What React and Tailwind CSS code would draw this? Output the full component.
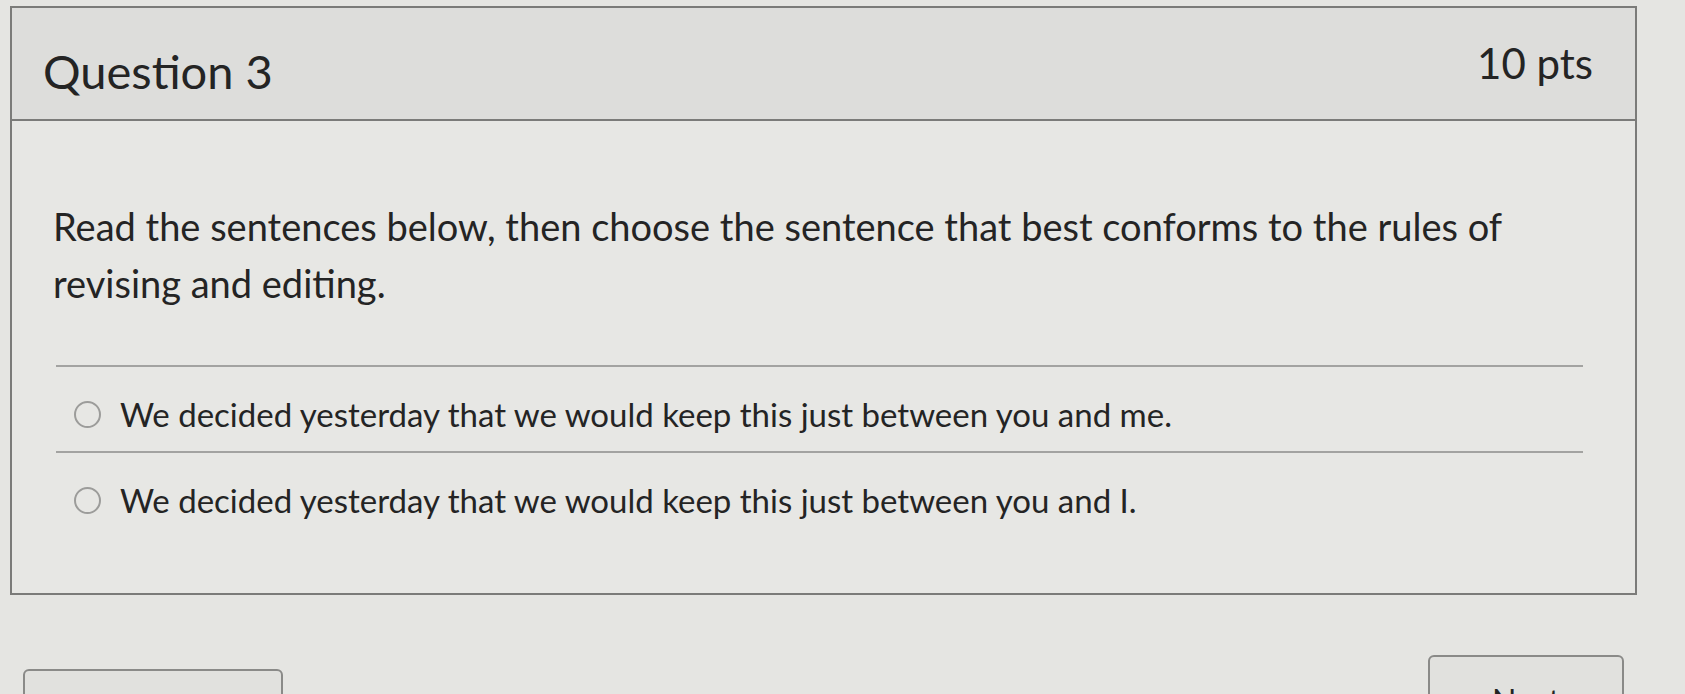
import React from 'react';

const options = [
  'We decided yesterday that we would keep this just between you and me.',
  'We decided yesterday that we would keep this just between you and I.',
];

function Option({ text }) {
  return (
    <label className="flex items-center h-[86px] pt-[10px] pl-[18px] border-t-2 border-[#a3a3a1] cursor-pointer">
      <span className="w-[27px] h-[27px] rounded-full border-2 border-[#9c9c9a] shrink-0" />
      <span className="ml-[19px] text-[33px] leading-none text-[#242424]">{text}</span>
    </label>
  );
}

export default function App() {
  return (
    <div
      className="h-screen overflow-hidden bg-[#e5e5e2] pt-[6px]"
      style={{ fontFamily: 'Lato, "Open Sans", sans-serif' }}
    >
      <div className="ml-[10px] w-[1627px] border-2 border-[#7b7b79] bg-[#e7e7e4]">
        <div className="flex items-center justify-between h-[113px] pt-[16px] pl-[31px] pr-[42px] bg-[#dddddb] border-b-2 border-[#7b7b79]">
          <h2 className="text-[47px] text-[#242424]">Question 3</h2>
          <span className="text-[42px] text-[#242424] -mt-[16px]">10 pts</span>
        </div>

        <div className="pt-[77px] pb-[56px] pl-[41px] pr-[40px]">
          <p className="text-[38px] leading-[57px] text-[#242424]">
            Read the sentences below, then choose the sentence that best conforms to the rules of revising and editing.
          </p>
          <div className="mt-[53px] ml-[3px] w-[1527px]">
            {options.map((o) => (
              <Option key={o} text={o} />
            ))}
          </div>
        </div>
      </div>

      <div className="flex items-start justify-between mt-[60px] pl-[23px] pr-[61px]">
        <button className="mt-[14px] w-[260px] h-[70px] rounded-[6px] border-2 border-[#8a8a88] bg-[#e1e1de] pt-[30px] text-[32px] leading-none text-[#242424]">
          Previous
        </button>
        <button className="w-[196px] h-[70px] rounded-[6px] border-2 border-[#8a8a88] bg-[#e1e1de] pt-[22px] text-[32px] leading-none text-[#242424]">
          Next
        </button>
      </div>
    </div>
  );
}
